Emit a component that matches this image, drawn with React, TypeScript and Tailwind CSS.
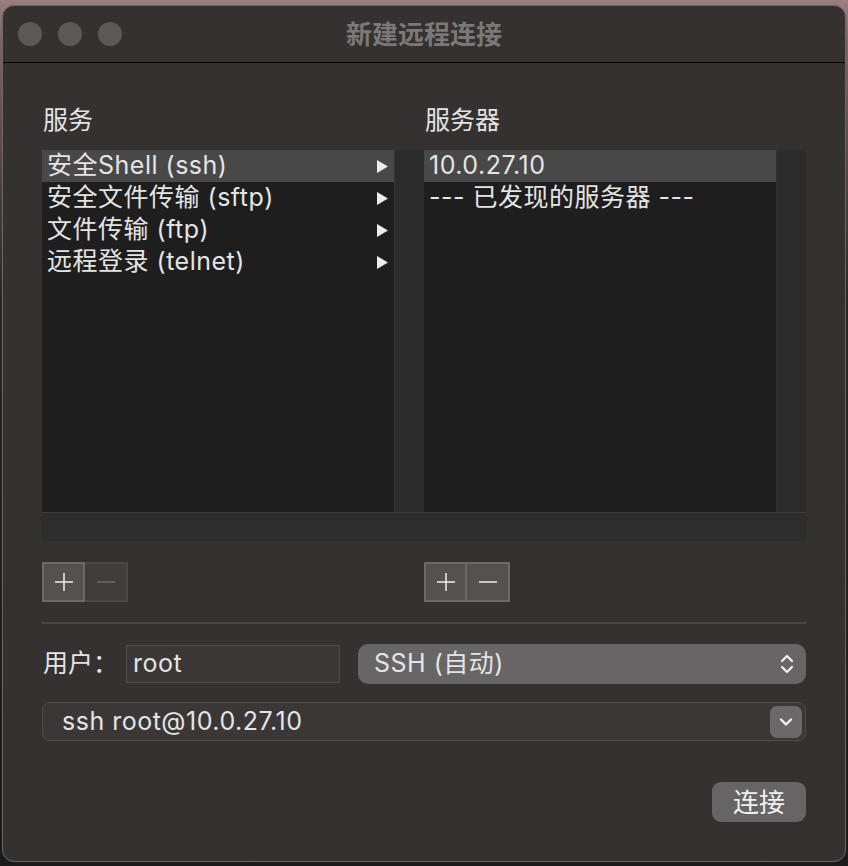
import React from 'react'

const font = { fontFamily: 'Inter, "Noto Sans CJK SC", sans-serif' }

const services = ['安全Shell (ssh)', '安全文件传输 (sftp)', '文件传输 (ftp)', '远程登录 (telnet)']

function Arrow() {
  return (
    <svg width="11" height="13" viewBox="0 0 11 13" className="shrink-0">
      <polygon points="0,0 11,6.5 0,13" fill="#ececec" />
    </svg>
  )
}

function Plus({ color }: { color: string }) {
  return (
    <svg width="18" height="18" viewBox="0 0 18 18">
      <rect x="0" y="8.25" width="18" height="1.5" fill={color} />
      <rect x="8.25" y="0" width="1.5" height="18" fill={color} />
    </svg>
  )
}

function Minus({ color }: { color: string }) {
  return (
    <svg width="18" height="18" viewBox="0 0 18 18">
      <rect x="0" y="8.25" width="18" height="1.5" fill={color} />
    </svg>
  )
}

function AddRemove({ removeEnabled }: { removeEnabled: boolean }) {
  return (
    <div className="flex h-[40px] w-[86px]">
      <button className="flex w-[43px] items-center justify-center border-2 border-[#6c6a69] bg-[#545251]">
        <Plus color="#f0f0f0" />
      </button>
      {removeEnabled ? (
        <button className="flex w-[43px] items-center justify-center border-2 border-l-0 border-[#6c6a69] bg-[#545251]">
          <Minus color="#f0f0f0" />
        </button>
      ) : (
        <button className="flex w-[43px] items-center justify-center border-2 border-l-0 border-[#4b4847] bg-[#403d3c]">
          <Minus color="#6c6a69" />
        </button>
      )}
    </div>
  )
}

export default function App() {
  return (
    <div
      className="h-[866px] w-[848px] overflow-hidden bg-[linear-gradient(180deg,#9a7f80_0px,#7a6466_40px,#2a2626_300px,#1a1a1a_866px)] pl-[2px] pt-[5px]"
      style={font}
    >
      <div className="flex h-[857px] w-[844px] flex-col rounded-[12px] border border-[#6a6766] bg-[#353130] tracking-[0.5px] text-[#e4e4e4]">
        {/* title bar */}
        <div className="relative flex h-[57px] shrink-0 items-center gap-[16px] border-b border-black pl-[15px]">
          <span className="h-[24px] w-[24px] rounded-full bg-[#5b5857]" />
          <span className="h-[24px] w-[24px] rounded-full bg-[#5b5857]" />
          <span className="h-[24px] w-[24px] rounded-full bg-[#5b5857]" />
          <div className="absolute inset-0 flex items-center justify-center text-[26px] font-bold tracking-normal text-[#7b7877]">
            新建远程连接
          </div>
        </div>

        <div className="flex flex-col px-[39px]">
          {/* labels */}
          <div className="flex h-[87px] items-end pb-[14px] text-[25px] leading-[32px] tracking-normal">
            <div className="w-[382px] pl-[1px]">服务</div>
            <div className="pl-[1px]">服务器</div>
          </div>

          {/* lists */}
          <div className="flex h-[391px] flex-col">
            <div className="flex h-[362px]">
              <div className="w-[352px] bg-[#1e1e1e]">
                {services.map((s, i) => (
                  <div
                    key={s}
                    className={`flex h-[32px] items-center justify-between pl-[5px] pr-[6px] text-[25px] ${
                      i === 0 ? 'bg-[#484848]' : ''
                    }`}
                  >
                    <span>{s}</span>
                    <Arrow />
                  </div>
                ))}
              </div>
              <div className="w-[30px] border-l border-[#353535] bg-[#2c2c2c]" />
              <div className="w-[352px] bg-[#1e1e1e]">
                <div className="flex h-[32px] items-center bg-[#484848] pl-[5px] text-[25px]">10.0.27.10</div>
                <div className="flex h-[32px] items-center pl-[5px] text-[25px]">--- 已发现的服务器 ---</div>
              </div>
              <div className="w-[30px] border-l border-[#353535] bg-[#2c2c2c]" />
            </div>
            <div className="h-[29px] border-t border-[#3d3d3d] bg-[#2d2d2d]" />
          </div>

          {/* add / remove */}
          <div className="mt-[21px] flex">
            <div className="w-[382px]">
              <AddRemove removeEnabled={false} />
            </div>
            <AddRemove removeEnabled={true} />
          </div>

          <div className="mt-[20px] h-[2px] bg-[#4a4645]" />

          {/* user row */}
          <div className="mt-[20px] flex h-[40px] items-center">
            <span className="w-[84px] pl-[1px] text-[25px] tracking-normal">用户：</span>
            <div className="flex h-[38px] w-[214px] items-center border border-[#514e4d] bg-[#3a3736] pl-[6px] text-[25px]">
              root
            </div>
            <div className="ml-[18px] flex h-[40px] flex-1 items-center justify-between rounded-[10px] bg-[#676566] pl-[16px] pr-[12px] text-[25px]">
              <span>SSH (自动)</span>
              <svg width="14" height="22" viewBox="0 0 14 22" fill="none" stroke="#f2f2f2" strokeWidth="2.2" strokeLinecap="round" strokeLinejoin="round">
                <polyline points="2,8 7,3 12,8" />
                <polyline points="2,14 7,19 12,14" />
              </svg>
            </div>
          </div>

          {/* command combo */}
          <div className="mt-[18px] flex h-[39px] items-center justify-between rounded-[8px] border border-[#4f4c4b] bg-[#3a3736] pl-[19px] pr-[3px] text-[25px]">
            <span>ssh root@10.0.27.10</span>
            <div className="flex h-[32px] w-[32px] items-center justify-center rounded-[7px] bg-[#6a6869]">
              <svg width="14" height="10" viewBox="0 0 14 10" fill="none" stroke="#f2f2f2" strokeWidth="2.4" strokeLinecap="round" strokeLinejoin="round">
                <polyline points="2,2.5 7,7.5 12,2.5" />
              </svg>
            </div>
          </div>

          {/* connect */}
          <div className="mt-[41px] flex justify-end">
            <button className="flex h-[40px] w-[94px] items-center justify-center rounded-[9px] bg-[#666465] text-[26px] tracking-normal text-[#f0f0f0]">
              连接
            </button>
          </div>
        </div>
      </div>
    </div>
  )
}
